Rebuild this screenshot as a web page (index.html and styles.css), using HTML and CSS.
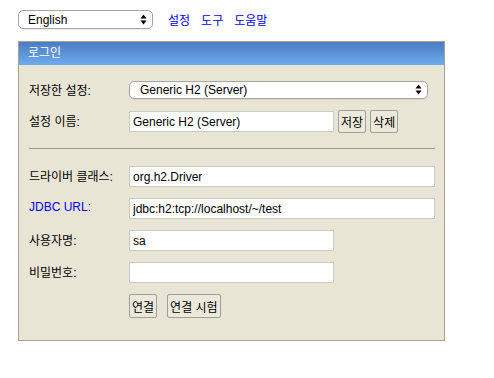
FILE: index.html
```html
<!DOCTYPE html>
<html lang="ko">
<head>
  <meta charset="UTF-8">
  <title>H2 Console</title>
  <link rel="stylesheet" href="styles.css">
</head>
<body>
  <div class="topbar">
    <div class="select-wrap lang">
      <select>
        <option>English</option>
      </select>
      <svg class="arrows" width="7" height="11" viewBox="0 0 7 11"><path d="M3.5 0.5 L6.5 4.5 H0.5 Z M3.5 10.5 L6.5 6.5 H0.5 Z" fill="#000"/></svg>
    </div>
    <a href="#">설정</a>
    <a href="#">도구</a>
    <a href="#">도움말</a>
  </div>

  <div class="login">
    <div class="login-head">로그인</div>
    <div class="login-body">
      <div class="row">
        <span class="label">저장한 설정:</span>
        <div class="select-wrap setting">
          <select>
            <option>Generic H2 (Server)</option>
          </select>
          <svg class="arrows" width="7" height="11" viewBox="0 0 7 11"><path d="M3.5 0.5 L6.5 4.5 H0.5 Z M3.5 10.5 L6.5 6.5 H0.5 Z" fill="#000"/></svg>
        </div>
      </div>
      <div class="row">
        <span class="label">설정 이름:</span>
        <div class="field">
          <input class="short" type="text" value="Generic H2 (Server)">
          <button>저장</button>
          <button>삭제</button>
        </div>
      </div>

      <div class="sep"></div>

      <div class="row">
        <span class="label">드라이버 클래스:</span>
        <input class="long" type="text" value="org.h2.Driver">
      </div>
      <div class="row">
        <span class="label"><a href="#">JDBC URL</a>:</span>
        <input class="long" type="text" value="jdbc:h2:tcp://localhost/~/test">
      </div>
      <div class="row">
        <span class="label">사용자명:</span>
        <input class="short" type="text" value="sa">
      </div>
      <div class="row">
        <span class="label">비밀번호:</span>
        <input class="short" type="password" value="">
      </div>
      <div class="row">
        <span class="label"></span>
        <div class="field actions">
          <button>연결</button>
          <button>연결 시험</button>
        </div>
      </div>
    </div>
  </div>
</body>
</html>
```

FILE: styles.css
```css
body {
  margin: 0;
  padding: 10px 18px;
  font-family: "Liberation Sans", "Noto Sans CJK KR", Arial, sans-serif;
  font-size: 12px;
  color: #000;
  background-color: #fff;
}
a {
  color: #0000ff;
  text-decoration: none;
}
.topbar {
  display: flex;
  align-items: center;
  gap: 11px;
  height: 19px;
}
.topbar .lang {
  margin-right: 4px;
}
.select-wrap {
  position: relative;
  display: flex;
}
.select-wrap select {
  appearance: none;
  -webkit-appearance: none;
  font-family: inherit;
  font-size: 12px;
  color: #000;
  background-color: #fff;
  border: 1px solid #a6a6a6;
  border-radius: 5px;
  padding: 0 0 0 9px;
  margin: 0;
  height: 19px;
  box-shadow: 0 1px 1px rgba(0, 0, 0, 0.08);
}
.lang select {
  width: 135px;
}
.setting select {
  width: 299px;
  height: 18px;
  padding-left: 10px;
}
.arrows {
  position: absolute;
  right: 6px;
  top: 4px;
  pointer-events: none;
}
.setting .arrows {
  top: 3px;
}
.login {
  margin-top: 12px;
  width: 425px;
  border: 1px solid #a5a293;
  background-color: #e8e5d4;
}
.login-head {
  height: 23px;
  line-height: 23px;
  padding-left: 9px;
  color: #fff;
  background: linear-gradient(#4c7bc0, #6eabef);
}
.login-body {
  padding: 10px 9px 20px 10px;
}
.row {
  display: flex;
  align-items: center;
  height: 32px;
}
.row:first-child {
  height: 30px;
}
.label {
  width: 100px;
  flex-shrink: 0;
  margin-top: -2px;
}
.field {
  display: flex;
  align-items: center;
  gap: 4px;
}
input {
  font-family: inherit;
  font-size: 12px;
  height: 21px;
  box-sizing: border-box;
  border: 1px solid #cacaca;
  background-color: #fff;
  padding: 1px 3px 0;
  margin: 0;
}
input.short {
  width: 205px;
}
input.long {
  width: 306px;
}
button {
  font-family: inherit;
  font-size: 12px;
  height: 23px;
  padding: 0 2px;
  margin: 0;
  border: 1px solid #a19f97;
  border-radius: 2px;
  background-color: #ebe8dc;
  color: #000;
}
.actions {
  gap: 10px;
  margin-top: 4px;
}
.actions button {
  height: 24px;
}
.sep {
  border-top: 1px solid #9a9a9a;
  margin: 11px 0 11px;
}
```
